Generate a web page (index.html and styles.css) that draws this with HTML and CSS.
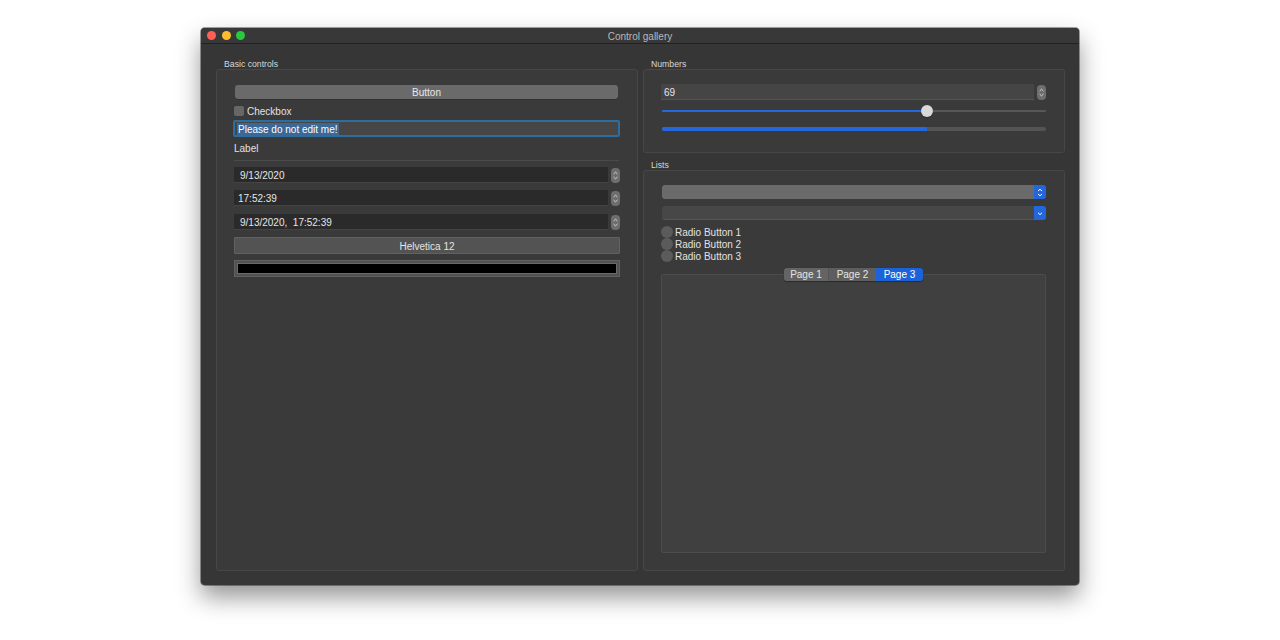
FILE: index.html
```html
<!DOCTYPE html>
<html>
<head>
<meta charset="utf-8">
<link rel="stylesheet" href="styles.css">
</head>
<body>
<div class="page">
  <div class="window">
    <div class="titlebar">
      <div class="lights">
        <span class="light red"></span>
        <span class="light yellow"></span>
        <span class="light green"></span>
      </div>
      <div class="title">Control gallery</div>
      <div></div>
    </div>
    <div class="content">
      <div class="col">
        <div class="group grow">
          <div class="group-title">Basic controls</div>
          <div class="group-box basic">
            <div class="button">Button</div>
            <label class="check-row"><span class="checkbox"></span><span class="txt">Checkbox</span></label>
            <div class="line-edit"><span class="sel">Please do not edit me!</span></div>
            <div class="plain-label">Label</div>
            <div class="separator"></div>
            <div class="spin-row r-date"><div class="dt-field">9/13/2020</div><svg class="spinner" width="9" height="15" viewBox="0 0 9 15"><rect x="0" y="0" width="9" height="15" rx="4" fill="#6e6e6e"/><path d="M2.6 6 L4.5 4.2 L6.4 6 M2.6 9 L4.5 10.8 L6.4 9" stroke="#dedede" stroke-width="0.9" fill="none"/></svg></div>
            <div class="spin-row r-time"><div class="dt-field tight">17:52:39</div><svg class="spinner" width="9" height="15" viewBox="0 0 9 15"><rect x="0" y="0" width="9" height="15" rx="4" fill="#6e6e6e"/><path d="M2.6 6 L4.5 4.2 L6.4 6 M2.6 9 L4.5 10.8 L6.4 9" stroke="#dedede" stroke-width="0.9" fill="none"/></svg></div>
            <div class="spin-row r-dt"><div class="dt-field">9/13/2020,&nbsp; 17:52:39</div><svg class="spinner" width="9" height="15" viewBox="0 0 9 15"><rect x="0" y="0" width="9" height="15" rx="4" fill="#6e6e6e"/><path d="M2.6 6 L4.5 4.2 L6.4 6 M2.6 9 L4.5 10.8 L6.4 9" stroke="#dedede" stroke-width="0.9" fill="none"/></svg></div>
            <div class="font-button">Helvetica 12</div>
            <div class="black-frame"><div class="black-bar"></div></div>
          </div>
        </div>
      </div>
      <div class="col">
        <div class="group">
          <div class="group-title">Numbers</div>
          <div class="group-box numbers">
            <div class="spin-row num"><div class="num-field">69</div><svg class="spinner" width="9" height="15" viewBox="0 0 9 15"><rect x="0" y="0" width="9" height="15" rx="4" fill="#6e6e6e"/><path d="M2.6 6 L4.5 4.2 L6.4 6 M2.6 9 L4.5 10.8 L6.4 9" stroke="#dedede" stroke-width="0.9" fill="none"/></svg></div>
            <div class="slider">
              <div class="groove"><div class="groove-fill" style="width:69%"></div></div>
              <div class="handle" style="left:calc(69% - 6px)"></div>
            </div>
            <div class="progress"><div class="progress-fill" style="width:69%"></div></div>
          </div>
        </div>
        <div class="group grow lists-group">
          <div class="group-title">Lists</div>
          <div class="group-box lists">
            <div class="combo light-combo">
              <div class="combo-body"></div>
              <div class="combo-btn"><svg width="12" height="13" viewBox="0 0 12 13"><path d="M4 5 L6 3.2 L8 5 M4 8 L6 9.8 L8 8" stroke="#ffffff" stroke-width="1" fill="none"/></svg></div>
            </div>
            <div class="combo dark-combo">
              <div class="combo-body"></div>
              <div class="combo-btn"><svg width="12" height="13" viewBox="0 0 12 13"><path d="M4 5.8 L6 7.6 L8 5.8" stroke="#ffffff" stroke-width="1" fill="none"/></svg></div>
            </div>
            <div class="radios">
              <label class="radio-row"><span class="radio"></span><span class="txt">Radio Button 1</span></label>
              <label class="radio-row"><span class="radio"></span><span class="txt">Radio Button 2</span></label>
              <label class="radio-row"><span class="radio"></span><span class="txt">Radio Button 3</span></label>
            </div>
            <div class="tab-widget">
              <div class="tab-bar">
                <div class="tab t1">Page 1</div>
                <div class="tab t2">Page 2</div>
                <div class="tab t3 active">Page 3</div>
              </div>
              <div class="tab-pane"></div>
            </div>
          </div>
        </div>
      </div>
    </div>
  </div>
</div>
</body>
</html>
```

FILE: styles.css
```css
* { box-sizing: border-box; }
html, body { margin: 0; padding: 0; background: #ffffff; }
body {
  font-family: "Liberation Sans", Arial, Helvetica, sans-serif;
  font-size: 10px;
  color: #e2e2e2;
}
.page {
  width: 1280px;
  height: 640px;
  padding-top: 28px;
  display: flex;
  justify-content: center;
  align-items: flex-start;
}
.window {
  width: 878px;
  height: 557px;
  background: #363636;
  border-radius: 4px;
  box-shadow: 0 12px 24px rgba(0,0,0,0.42), 0 0 0 1px rgba(0,0,0,0.35);
  display: flex;
  flex-direction: column;
  overflow: hidden;
}
.titlebar {
  height: 16px;
  background: #383838;
  border-bottom: 1px solid #222222;
  display: grid;
  grid-template-columns: 1fr auto 1fr;
  align-items: center;
}
.lights { display: flex; gap: 5.5px; padding-left: 6px; }
.light { width: 9px; height: 9px; border-radius: 50%; display: block; }
.red { background: #fe5f57; }
.yellow { background: #febc2e; }
.green { background: #28c840; }
.title { color: #b8b8b8; font-size: 10px; line-height: 17px; height: 15px; }

.content {
  flex: 1;
  display: flex;
  gap: 5px;
  padding: 13px 14px 14px 15px;
}
.col { width: 422px; display: flex; flex-direction: column; }
.group { display: flex; flex-direction: column; }
.grow { flex: 1; }
.lists-group { margin-top: 5px; }
.group-title {
  font-size: 8.7px;
  line-height: 14px;
  height: 12px;
  padding-left: 8px;
  color: #d6d6d6;
}
.group-box {
  background: #3a3a3a;
  border: 1px solid #474747;
  border-radius: 3px;
  display: flex;
  flex-direction: column;
}
.grow > .group-box { flex: 1; }

/* basic controls */
.basic { padding: 15px 17px 0 17px; }
.button {
  height: 14px;
  margin: 0 2px 0 1px;
  background: #6a6a6a;
  border-radius: 3px;
  box-shadow: 0 0.5px 0 rgba(0,0,0,0.3);
  text-align: center;
  line-height: 16px;
  color: #e8e8e8;
}
.txt { line-height: 14px; height: 12px; }
.check-row {
  margin-top: 6px;
  height: 12px;
  display: flex;
  align-items: center;
  gap: 3px;
}
.checkbox {
  width: 10px; height: 10px;
  background: #676767;
  border-radius: 2px;
  display: block;
}
.line-edit {
  margin: 3px 0 0 -1px;
  height: 17px;
  border: 2px solid #2e6d9f;
  border-radius: 2px;
  background: #464646;
  padding-left: 2px;
  display: flex;
  align-items: center;
}
.sel { background: #3b6896; color: #ffffff; line-height: 14px; height: 12px; padding: 0 1px; }
.plain-label { margin-top: 5px; height: 12px; line-height: 14px; }
.separator { margin-top: 6px; height: 1px; background: #4a4a4a; margin-right: 1px; }
.spin-row { display: flex; align-items: center; gap: 3px; height: 16px; }
.r-date { margin-top: 6px; }
.r-time { margin-top: 7px; }
.r-dt { margin-top: 8px; }
.spinner { display: block; flex: none; }
.dt-field {
  flex: 1;
  height: 16px;
  background: #2a2a2a;
  border-bottom: 1px solid #444444;
  padding-left: 6px;
  line-height: 18px;
  color: #e6e6e6;
}
.dt-field.tight { padding-left: 4px; }
.font-button {
  margin-top: 7px;
  height: 17px;
  background: #535353;
  border: 1px solid #616161;
  border-radius: 1px;
  text-align: center;
  line-height: 17px;
  color: #e4e4e4;
}
.black-frame {
  margin-top: 6px;
  height: 17px;
  background: #525252;
  border: 1px solid #616161;
  padding: 2px 2px;
}
.black-bar {
  height: 11px;
  background: #000000;
  border: 1px solid #6a6a6a;
}

/* numbers */
.numbers { padding: 14px 18px 21px 17px; }
.num-field {
  flex: 1;
  height: 16px;
  background: #454545;
  border-bottom: 1px solid #555555;
  padding-left: 3px;
  line-height: 18px;
  color: #e6e6e6;
}
.slider {
  position: relative;
  margin: 5px 0 0 1px;
  height: 12px;
  display: flex;
  align-items: center;
}
.groove {
  flex: 1;
  height: 2px;
  background: #575757;
  border-radius: 1px;
  display: flex;
}
.groove-fill { background: #2468de; border-radius: 1px; }
.handle {
  position: absolute;
  top: 0;
  width: 12px; height: 12px;
  border-radius: 50%;
  background: #d9d9d9;
  box-shadow: 0 0.5px 1px rgba(0,0,0,0.4);
}
.progress {
  margin: 10px 0 0 1px;
  height: 4px;
  background: #545454;
  border-radius: 2px;
  display: flex;
  overflow: hidden;
}
.progress-fill { background: #2468de; }

/* lists */
.lists { padding: 14px 18px 17px 17px; }
.combo { display: flex; height: 14px; border-radius: 3px; overflow: hidden; margin-left: 1px; }
.dark-combo { margin-top: 7px; }
.combo-body { flex: 1; }
.light-combo .combo-body { background: #6a6a6a; }
.dark-combo .combo-body { background: #474747; border-bottom: 1px solid #565656; }
.combo-btn {
  width: 12px;
  background: #2466dc;
  display: flex; align-items: center; justify-content: center;
}
.combo-btn svg { display: block; }
.radios { margin-top: 6px; display: flex; flex-direction: column; }
.radio-row { height: 12px; display: flex; align-items: center; gap: 2px; color: #e2e2e2; }
.radio {
  width: 12px; height: 12px;
  border-radius: 50%;
  background: #5b5b5b;
  display: block;
}
.tab-widget { margin-top: 6px; flex: 1; display: flex; flex-direction: column; }
.tab-bar {
  align-self: center;
  display: flex;
  height: 13px;
  margin-bottom: -7px;
  position: relative;
  z-index: 1;
  border-radius: 3px;
  overflow: hidden;
  box-shadow: 0 0.5px 1px rgba(0,0,0,0.35);
}
.tab {
  line-height: 14px;
  text-align: center;
  color: #e6e6e6;
  background: #646464;
}
.t1 { width: 45px; border-right: 1px solid #555555; }
.t2 { width: 47px; background: #5e5e5e; }
.t3 { width: 47px; }
.tab.active { background: #1c63d9; color: #ffffff; }
.tab-pane {
  flex: 1;
  background: #404040;
  border: 1px solid #4c4c4c;
  border-radius: 2px;
}
```
